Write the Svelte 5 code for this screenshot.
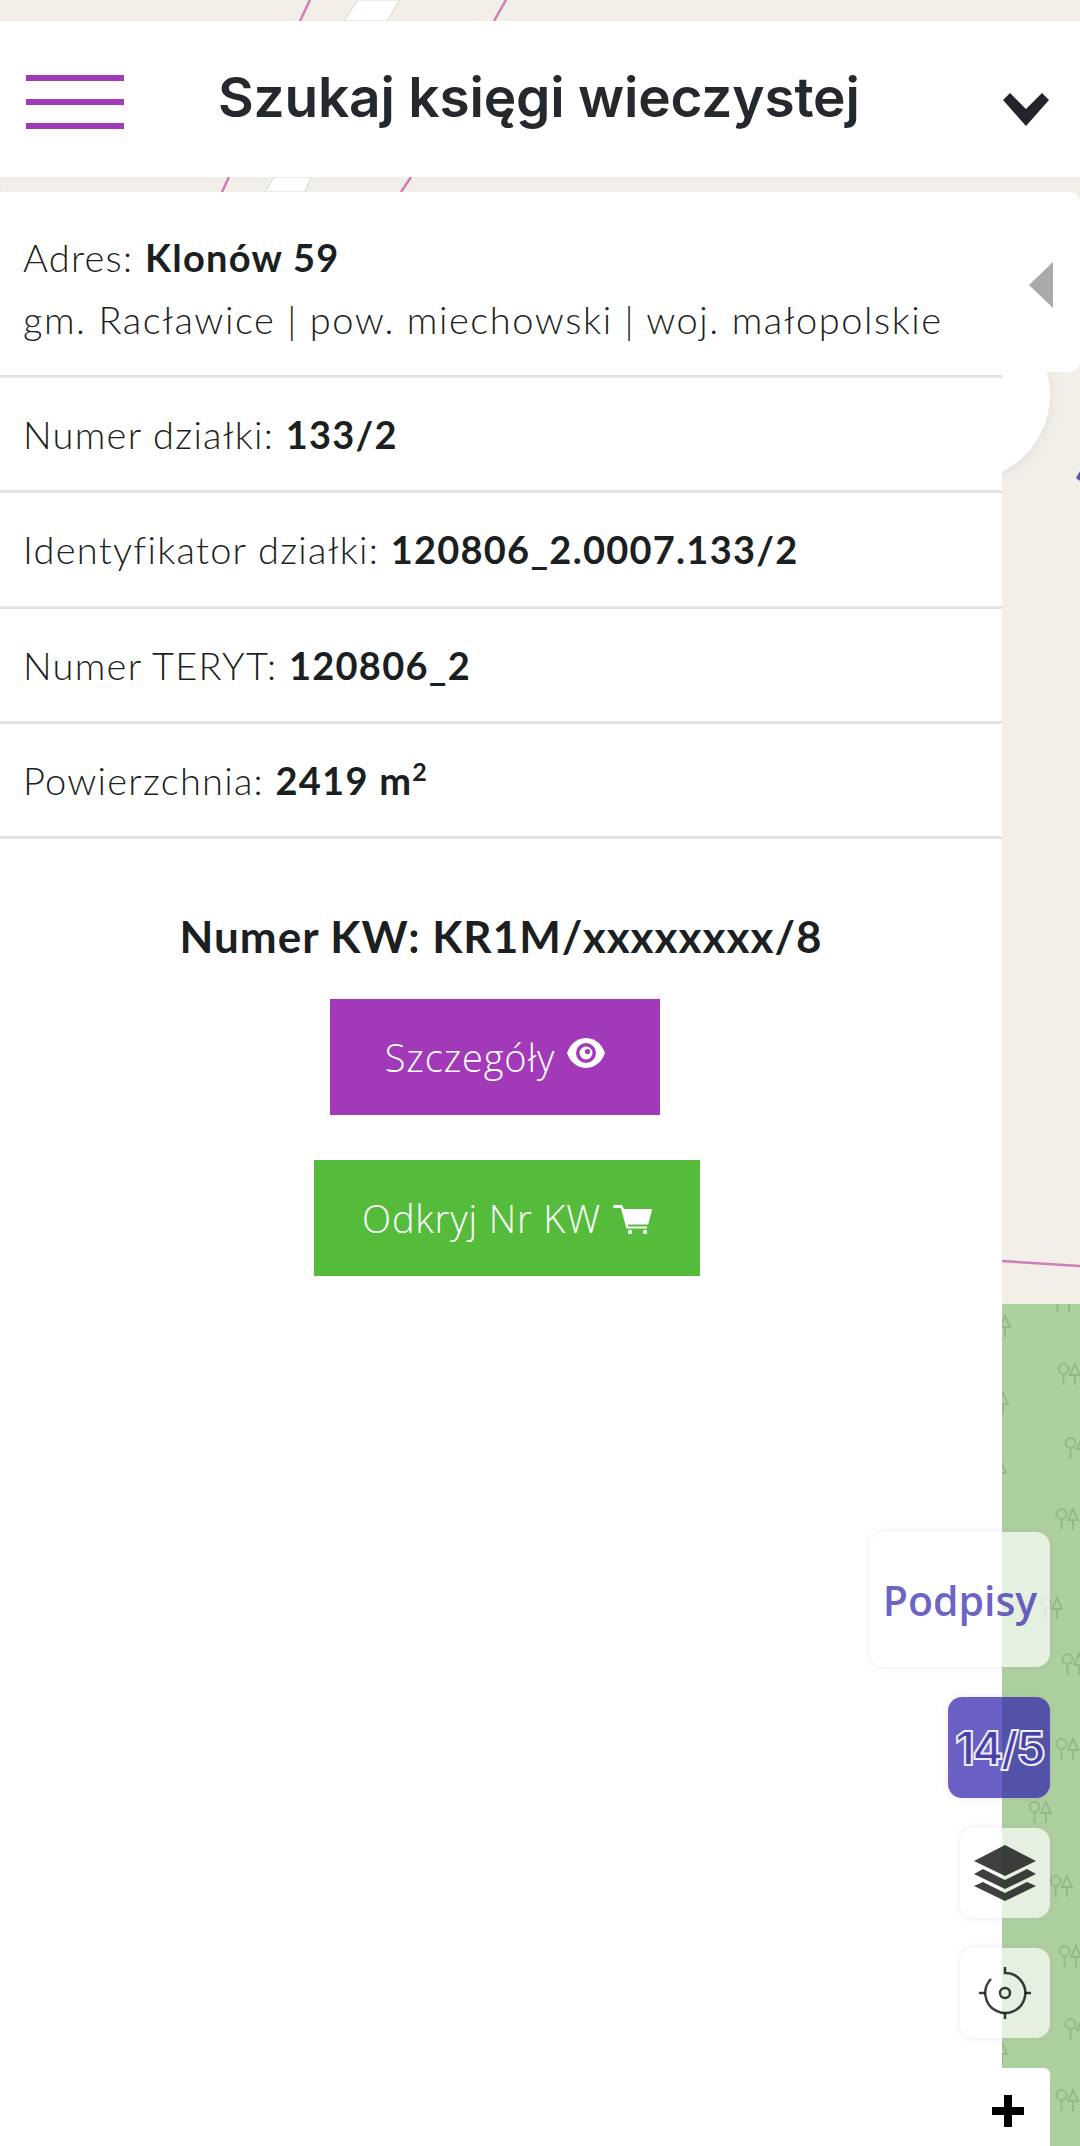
<script>
    const rows = [
        { label: "Numer działki:", value: "133/2" },
        { label: "Identyfikator działki:", value: "120806_2.0007.133/2" },
        { label: "Numer TERYT:", value: "120806_2" },
    ];

    // [x, y] of the tree pairs on the map
    const trees = [
        [1058, 1363], [1065, 1437], [1056, 1508], [984, 1461], [988, 1315], [986, 1392],
        [1052, 1290], [1040, 1597], [1062, 1653], [1056, 1738], [1029, 1801], [1050, 1875],
        [1059, 1945], [1065, 2018], [985, 2042], [1056, 2089],
    ];
</script>

<div class="page">
    <svg class="map" width="1080" height="2146" viewBox="0 0 1080 2146">
        <defs>
            <g id="tree">
                <circle cx="5.5" cy="6" r="5" />
                <path d="M5.5 11v11M17 1l-5 11h10zM17 12v10" />
            </g>
            <clipPath id="wood"><rect x="0" y="1304" width="1080" height="842" /></clipPath>
        </defs>
        <path class="road" d="M358 0h42l-13 21h-43zM274 177h37l-6 15h-40z" />
        <path class="border" d="M310 0l-10 21M506 0l-12 21M229 177l-7 15M411 177l-10 15M0 192l4 8M1002 1261l78 5" />
        <rect x="0" y="1304" width="1080" height="842" fill="#add19e" />
        <g clip-path="url(#wood)">
            {#each trees as [x, y]}
                <use href="#tree" x={x} y={y} class="tree" />
            {/each}
        </g>
        <path d="M1076 478l4-7v10z" fill="#5b52b8" />
        <circle class="blob" cx="965" cy="395" r="85" />
    </svg>

    <header class="top">
        <button class="burger" aria-label="Menu"><i></i><i></i><i></i></button>
        <h1>Szukaj księgi wieczystej</h1>
        <svg class="chevron" width="48" height="33" viewBox="0 0 48 33">
            <path d="M1 7l7-7 16 16L40 0l7 7-23 26z" />
        </svg>
    </header>

    <main class="panel">
        <section class="card">
            <p>Adres: <b>Klonów 59</b></p>
            <p class="area">gm. Racławice | pow. miechowski | woj. małopolskie</p>
            <span class="arrow"></span>
        </section>

        {#each rows as row}
            <div class="row">{row.label} <b>{row.value}</b></div>
        {/each}
        <div class="row last">Powierzchnia: <b>2419 m<sup>2</sup></b></div>

        <div class="kw">
            <h2>Numer KW: KR1M/xxxxxxxx/8</h2>
            <button class="btn purple">
                Szczegóły
                <svg class="eye" viewBox="0 0 38 30" width="38" height="30">
                    <path d="M19 0C30 0 36 9 38 15 36 21 30 30 19 30S2 21 0 15C2 9 8 0 19 0z" />
                    <circle class="iris" cx="19" cy="15" r="10" />
                    <circle cx="19" cy="15" r="6.5" />
                    <circle class="iris" cx="20.5" cy="13.5" r="2.6" />
                </svg>
            </button>
            <button class="btn green">
                Odkryj Nr KW
                <svg class="cart" viewBox="0 0 39 29" width="39" height="29">
                    <path d="M1.5 0H8a2 2 0 0 1 2 1.5L10.6 4H38a1 1 0 0 1 1 1.3l-3.6 13.4a1 1 0 0 1-1 .8H14.6l.5 2H34v2H13.4L8 3H1.5a1.5 1.5 0 0 1 0-3z" />
                    <circle cx="17" cy="27" r="2.2" />
                    <circle cx="32" cy="27" r="2.2" />
                </svg>
            </button>
        </div>
    </main>

    <div class="controls">
        <button class="ctl podpisy">Podpisy</button>
        <button class="ctl zoomlevel">14/5</button>
        <button class="ctl square" aria-label="Warstwy">
            <svg width="62" height="56" viewBox="0 0 62 56">
                <path d="M31 0l31 16-31 15L0 16z" />
                <path d="M9 24l22 11 22-11 9 5-31 15L0 29z" />
                <path d="M9 37l22 11 22-11 9 4-31 15L0 41z" />
            </svg>
        </button>
        <button class="ctl square" aria-label="Moja lokalizacja">
            <svg class="target" width="54" height="54" viewBox="0 0 54 54">
                <path d="M27 1v6A20 20 0 1 1 13 13" />
                <circle cx="27" cy="27" r="5" />
                <path d="M1 27h6M47 27h6M27 47v6" />
            </svg>
        </button>
    </div>
    <button class="plus" aria-label="Przybliż"><i></i></button>
</div>

<style>
    :global(body) {
        font-family: "Lato", "Open Sans", sans-serif;
        color: #1c1f22;
    }

    .page {
        position: relative;
        height: 2146px;
        padding-top: 21px;
        box-sizing: border-box;
        overflow: hidden;
        background: #f2efe9;
    }

    .map {
        position: absolute;
        top: 0;
        left: 0;
    }

    .road {
        fill: #fff;
        stroke: #d9d5ce;
        stroke-width: 1;
    }

    .border {
        fill: none;
        stroke: #d07fb4;
        stroke-width: 2.5;
    }

    .tree {
        fill: none;
        stroke: #94bb87;
        stroke-width: 2;
    }

    .blob {
        fill: #fff;
        filter: drop-shadow(0 2px 6px rgba(120, 80, 120, 0.12));
    }

    .top {
        position: relative;
        display: flex;
        align-items: center;
        height: 156px;
        background: #fff;
    }

    .burger {
        display: flex;
        flex-direction: column;
        gap: 18px;
        width: 98px;
        margin: 6px 0 0 26px;
        padding: 0;
        border: 0;
        background: none;
    }

    .burger i {
        display: block;
        height: 6px;
        background: #a239b8;
    }

    h1 {
        margin: -4px 0 0 94px;
        font-family: "Inter", sans-serif;
        font-size: 55px;
        font-weight: 600;
        letter-spacing: -0.2px;
        white-space: nowrap;
        color: #25282c;
    }

    .chevron {
        position: absolute;
        left: 1002px;
        top: 72px;
        fill: #212529;
    }

    .panel {
        position: relative;
        width: 1002px;
        height: 1954px;
        margin-top: 15px;
        background: #fff;
        font-size: 38px;
        font-weight: 300;
        letter-spacing: 1.25px;
    }

    .panel b {
        font-weight: 700;
    }

    .card {
        position: relative;
        box-sizing: border-box;
        width: 1080px;
        height: 180px;
        padding-top: 43px;
        margin-bottom: 3px;
        background: #fff;
        border-radius: 10px;
    }

    .card p {
        margin: 0 0 18px 23px;
        line-height: 44px;
    }

    .card .area {
        letter-spacing: 1.55px;
    }

    .arrow {
        position: absolute;
        top: 70px;
        right: 27px;
        border-style: solid;
        border-width: 23px 24px 23px 0;
        border-color: transparent #aaa transparent transparent;
    }

    .row {
        box-sizing: border-box;
        height: 115.4px;
        padding-left: 23px;
        border-top: 3px solid #e3e3e3;
        line-height: 112px;
    }

    .row.last {
        border-bottom: 3px solid #e3e3e3;
        height: 118px;
    }

    sup {
        font-size: 25px;
        line-height: 0;
    }

    .kw {
        display: flex;
        flex-direction: column;
        align-items: center;
    }

    h2 {
        margin: 72px 0 0;
        font-size: 44px;
        font-weight: 700;
        letter-spacing: 1px;
        line-height: 50px;
        white-space: nowrap;
    }

    .btn {
        display: flex;
        align-items: center;
        justify-content: center;
        gap: 12px;
        height: 116px;
        padding: 0;
        border: 0;
        font-family: "Open Sans", sans-serif;
        font-size: 38px;
        font-weight: 300;
        letter-spacing: 0.85px;
        color: #fff;
    }

    .btn svg {
        fill: #fff;
    }

    .btn .eye {
        margin-top: -8px;
    }

    .btn .eye .iris {
        fill: #a239b8;
    }

    .btn .cart {
        margin-top: 2px;
    }

    .purple {
        width: 330px;
        margin: 38px 12px 0 0;
        background: #a239b8;
    }

    .green {
        width: 386px;
        margin: 45px 0 0 12px;
        background: #54bc3a;
    }

    .controls {
        position: absolute;
        top: 1532px;
        right: 30px;
        display: flex;
        flex-direction: column;
        align-items: flex-end;
        gap: 30px;
    }

    .ctl {
        display: flex;
        align-items: center;
        justify-content: center;
        padding: 0;
        border: 0;
        border-radius: 14px;
        background: rgba(255, 255, 255, 0.68);
        box-shadow: 0 0 8px rgba(162, 57, 184, 0.12);
    }

    .podpisy {
        width: 180px;
        height: 135px;
        font-family: "Open Sans", sans-serif;
        font-size: 41px;
        font-weight: 600;
        color: rgba(45, 30, 172, 0.71);
    }

    .zoomlevel {
        width: 102px;
        height: 101px;
        background: rgba(45, 30, 172, 0.71);
        font-family: "Inter", sans-serif;
        font-size: 46px;
        font-weight: 700;
        letter-spacing: -2.5px;
        color: rgba(70, 60, 170, 0.9);
        -webkit-text-stroke: 2px #eee;
    }

    .square {
        width: 90px;
        height: 90px;
    }

    .square svg {
        fill: rgba(10, 10, 10, 0.78);
    }

    .square .target {
        fill: none;
        stroke: rgba(10, 10, 10, 0.8);
        stroke-width: 2.5;
    }

    .plus {
        position: absolute;
        top: 2068px;
        left: 960px;
        width: 90px;
        height: 78px;
        padding: 0;
        border: 0;
        border-radius: 0 6px 0 0;
        background: #fff;
    }

    .plus i {
        position: absolute;
        top: 27px;
        left: 32px;
        width: 32px;
        height: 32px;
        background:
            linear-gradient(#000, #000) center / 100% 8px no-repeat,
            linear-gradient(#000, #000) center / 8px 100% no-repeat;
    }
</style>
